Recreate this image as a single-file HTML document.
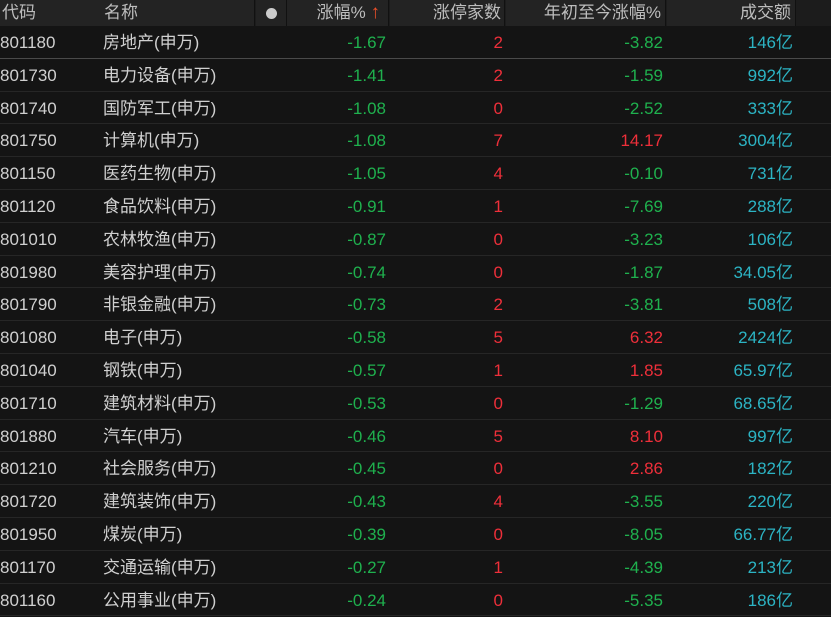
<!DOCTYPE html>
<html><head><meta charset="utf-8"><style>
body{margin:0;width:831px;height:614px;overflow:hidden;background:#141414;font-family:"Liberation Sans","Noto Sans CJK SC",sans-serif;font-size:17px;color:#d0d0d0}
.hd{position:absolute;top:0;left:0;width:831px;height:26px;background:#1c1c1c}
.hc{position:absolute;top:0;height:26px;line-height:26px;background:#232323;color:#bdbdbd;border-right:1px solid #111}
.row{position:absolute;left:0;width:831px;height:31.8px;border-bottom:1px solid #262626}
.row span{position:absolute;top:1px;line-height:32px}
.g{color:#1fb14e}.r{color:#ee2f3a}.c{color:#2cb4c4}
</style></head><body>
<div class="hd">
<div class="hc" style="left:0;width:97px;padding-left:2px">代码</div>
<div class="hc" style="left:99px;width:156px;padding-left:5px;box-sizing:border-box">名称</div>
<div class="hc" style="left:256px;width:30px;text-align:center"><span style="display:inline-block;width:11px;height:11px;border-radius:50%;background:#ccc;vertical-align:-1px"></span></div>
<div class="hc" style="left:287px;width:102px;text-align:right;box-sizing:border-box;padding-right:8px">涨幅% <span style="color:#f0502a;font-size:19px;font-weight:bold">↑</span></div>
<div class="hc" style="left:390px;width:115px;text-align:right;box-sizing:border-box;padding-right:3px">涨停家数</div>
<div class="hc" style="left:506px;width:160px;text-align:right;box-sizing:border-box;padding-right:4px">年初至今涨幅%</div>
<div class="hc" style="left:667px;width:129px;text-align:right;box-sizing:border-box;padding-right:4px">成交额</div>
</div>
<div id="t"></div>
<script>
var d=[["801180","房地产(申万)","-1.67","2","-3.82","146亿"],["801730","电力设备(申万)","-1.41","2","-1.59","992亿"],["801740","国防军工(申万)","-1.08","0","-2.52","333亿"],["801750","计算机(申万)","-1.08","7","14.17","3004亿"],["801150","医药生物(申万)","-1.05","4","-0.10","731亿"],["801120","食品饮料(申万)","-0.91","1","-7.69","288亿"],["801010","农林牧渔(申万)","-0.87","0","-3.23","106亿"],["801980","美容护理(申万)","-0.74","0","-1.87","34.05亿"],["801790","非银金融(申万)","-0.73","2","-3.81","508亿"],["801080","电子(申万)","-0.58","5","6.32","2424亿"],["801040","钢铁(申万)","-0.57","1","1.85","65.97亿"],["801710","建筑材料(申万)","-0.53","0","-1.29","68.65亿"],["801880","汽车(申万)","-0.46","5","8.10","997亿"],["801210","社会服务(申万)","-0.45","0","2.86","182亿"],["801720","建筑装饰(申万)","-0.43","4","-3.55","220亿"],["801950","煤炭(申万)","-0.39","0","-8.05","66.77亿"],["801170","交通运输(申万)","-0.27","1","-4.39","213亿"],["801160","公用事业(申万)","-0.24","0","-5.35","186亿"]];
var h="";d.forEach(function(r,i){var top=26+i*32.8;var bc=i==0?"#4a4a4a":"#262626";
h+='<div class="row" style="top:'+top+'px;border-bottom-color:'+bc+'"><span style="left:0">'+r[0]+'</span><span style="left:103px">'+r[1]+'</span><span class="g" style="right:445px">'+r[2]+'</span><span class="r" style="right:328px">'+r[3]+'</span><span class="'+(r[4][0]=="-"?"g":"r")+'" style="right:168px">'+r[4]+'</span><span class="c" style="right:38px">'+r[5]+'</span></div>';});
document.getElementById("t").innerHTML=h;
</script>
</body></html>
